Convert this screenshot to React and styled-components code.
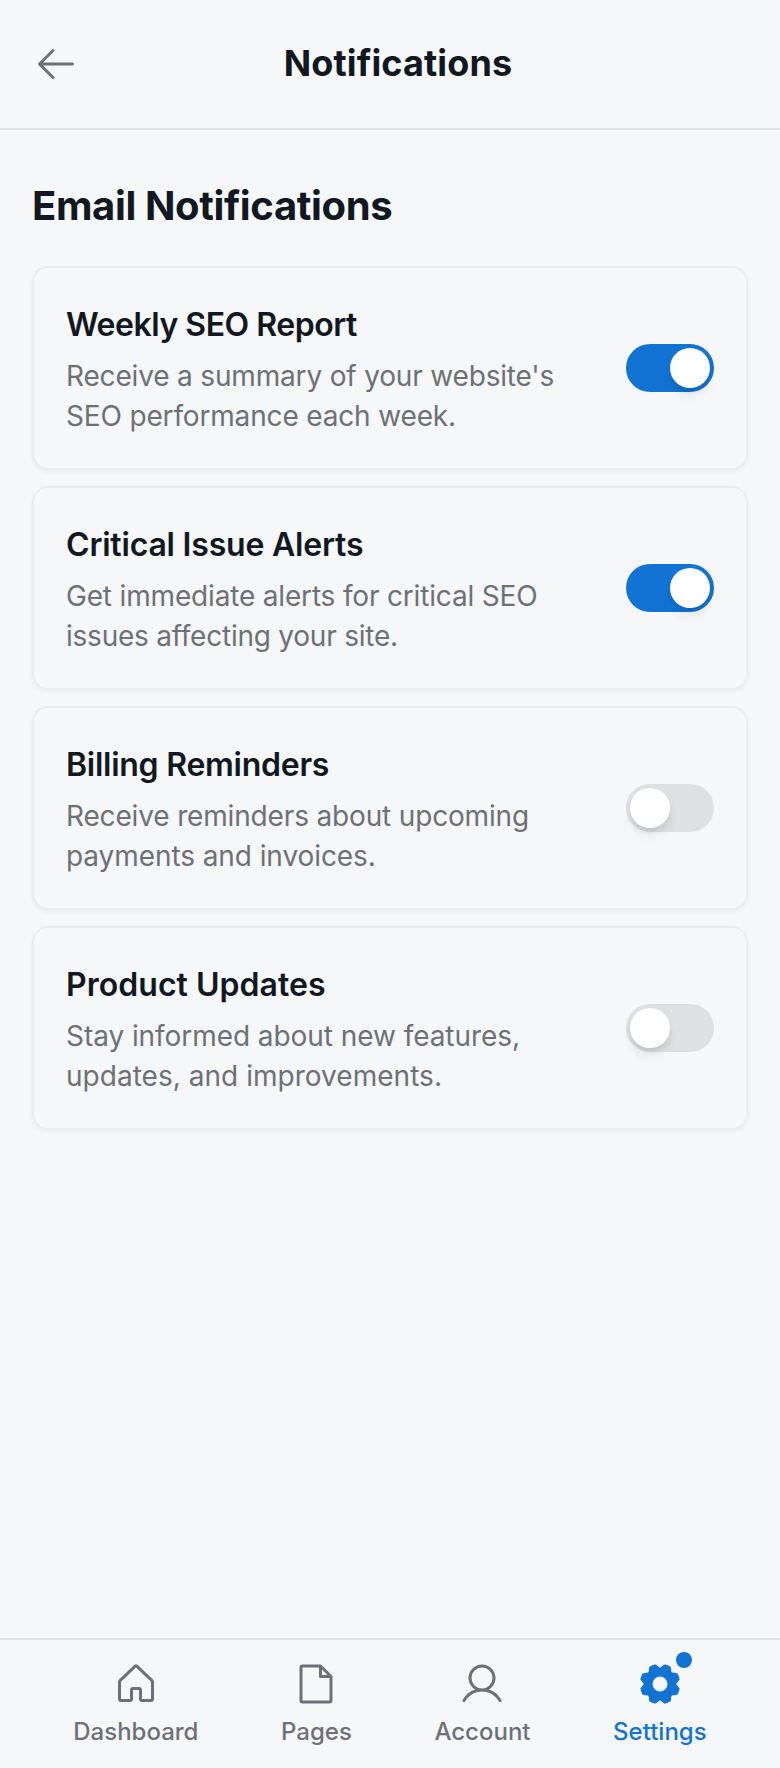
import React, { useState } from 'react';
import styled, { createGlobalStyle } from 'styled-components';
import { PiArrowLeft, PiFile, PiUser, PiGearFill } from 'react-icons/pi';

const GlobalStyle = createGlobalStyle`
  *, *::before, *::after { box-sizing: border-box; }
  body {
    margin: 0;
    background: #f6f7f8;
    color: #111821;
    font-family: Inter, "Liberation Sans", sans-serif;
  }
  button { font: inherit; color: inherit; border: 0; padding: 0; background: none; cursor: pointer; }
  h1, h2, h3, p { margin: 0; }
  svg { display: block; }
`;

const Screen = styled.div`
  display: flex;
  flex-direction: column;
  min-height: 1768px;
`;

const Header = styled.header`
  display: flex;
  align-items: center;
  height: 130px;
  padding: 0 32px;
  border-bottom: 2px solid #dfe1e3;
`;

const BackButton = styled.button`
  color: #6d7177;
`;

const Title = styled.h1`
  flex: 1;
  margin-bottom: 2px;
  padding-right: 32px;
  font-size: 36px;
  line-height: 54px;
  font-weight: 700;
  letter-spacing: 0.12px;
  text-align: center;
`;

const Main = styled.main`
  flex: 1;
  padding: 48px 32px;
`;

const SectionTitle = styled.h2`
  margin-bottom: 32px;
  font-size: 40px;
  line-height: 56px;
  font-weight: 700;
  letter-spacing: -0.37px;
`;

const CardList = styled.div`
  display: flex;
  flex-direction: column;
  gap: 16px;
`;

const Card = styled.div`
  display: flex;
  align-items: center;
  justify-content: space-between;
  gap: 32px;
  padding: 32px;
  border: 2px solid #ebecee;
  border-radius: 16px;
  box-shadow: 0 2px 4px rgba(0, 0, 0, 0.05);
`;

const CardText = styled.div`
  flex: 1;
`;

const CardTitle = styled.h3`
  margin-bottom: 6px;
  font-size: 32px;
  line-height: 50px;
  font-weight: 600;
  letter-spacing: ${({ $tracking }) => $tracking}px;
`;

const CardDescription = styled.p`
  color: #6d7177;
  font-size: 28px;
  line-height: 40px;
`;

const Line = styled.span`
  display: block;
  letter-spacing: ${({ $tracking }) => $tracking}px;
`;

const Toggle = styled.button`
  display: flex;
  flex: none;
  justify-content: ${({ $on }) => ($on ? 'flex-end' : 'flex-start')};
  width: 88px;
  height: 48px;
  padding: 4px;
  border-radius: 24px;
  background: ${({ $on }) => ($on ? '#1173d4' : '#dfe0e2')};
`;

const Knob = styled.span`
  width: 40px;
  height: 40px;
  border-radius: 50%;
  background: #fff;
  box-shadow: 0 8px 12px -2px rgba(0, 0, 0, 0.1), 0 4px 8px -4px rgba(0, 0, 0, 0.1);
`;

const Nav = styled.nav`
  display: flex;
  justify-content: space-around;
  height: 130px;
  padding: 20px 32px;
  border-top: 2px solid #dfe1e3;
`;

const NavItem = styled.button`
  display: flex;
  flex-direction: column;
  align-items: center;
  gap: 8px;
  color: ${({ $active }) => ($active ? '#1173d4' : '#6d7177')};
`;

const NavIcon = styled.span`
  position: relative;
`;

const Dot = styled.span`
  position: absolute;
  top: -8px;
  right: -8px;
  width: 16px;
  height: 16px;
  border-radius: 50%;
  background: #1173d4;
`;

const NavLabel = styled.span`
  font-size: 24px;
  line-height: 32px;
  font-weight: 500;
`;

function HouseIcon({ size }) {
  return (
    <svg width={size} height={size} viewBox="0 0 256 256" fill="currentColor" aria-hidden="true">
      <path d="M218.83,103.77l-80-75.48a1.14,1.14,0,0,1-.11-.11,16,16,0,0,0-21.53,0l-.11.11L37.17,103.77A16,16,0,0,0,32,115.55V208a16,16,0,0,0,16,16H96a16,16,0,0,0,16-16V160h32v48a16,16,0,0,0,16,16h48a16,16,0,0,0,16-16V115.55A16,16,0,0,0,218.83,103.77ZM208,208H160V160a16,16,0,0,0-16-16H112a16,16,0,0,0-16,16v48H48V115.55l.11-.1L128,40l79.9,75.43.11.1Z" />
    </svg>
  );
}

const settings = [
  {
    title: 'Weekly SEO Report',
    tracking: -0.47,
    lines: [["Receive a summary of your website's", -0.17], ['SEO performance each week.', -0.16]],
    on: true,
  },
  {
    title: 'Critical Issue Alerts',
    tracking: -0.2,
    lines: [['Get immediate alerts for critical SEO', -0.17], ['issues affecting your site.', -0.23]],
    on: true,
  },
  {
    title: 'Billing Reminders',
    tracking: -0.26,
    lines: [['Receive reminders about upcoming', -0.16], ['payments and invoices.', -0.08]],
    on: false,
  },
  {
    title: 'Product Updates',
    tracking: 0.04,
    lines: [['Stay informed about new features,', -0.06], ['updates, and improvements.', 0.03]],
    on: false,
  },
];

const tabs = [
  { label: 'Dashboard', icon: HouseIcon },
  { label: 'Pages', icon: PiFile },
  { label: 'Account', icon: PiUser },
  { label: 'Settings', icon: PiGearFill, active: true },
];

function SettingCard({ title, tracking, lines, on }) {
  const [checked, setChecked] = useState(on);
  return (
    <Card>
      <CardText>
        <CardTitle $tracking={tracking}>{title}</CardTitle>
        <CardDescription>
          {lines.map(([text, lineTracking]) => (
            <Line key={text} $tracking={lineTracking}>{text}</Line>
          ))}
        </CardDescription>
      </CardText>
      <Toggle $on={checked} role="switch" aria-checked={checked} aria-label={title} onClick={() => setChecked(!checked)}>
        <Knob />
      </Toggle>
    </Card>
  );
}

export default function App() {
  return (
    <Screen>
      <GlobalStyle />
      <Header>
        <BackButton aria-label="Back">
          <PiArrowLeft size={48} />
        </BackButton>
        <Title>Notifications</Title>
      </Header>
      <Main>
        <SectionTitle>Email Notifications</SectionTitle>
        <CardList>
          {settings.map((s) => (
            <SettingCard key={s.title} {...s} />
          ))}
        </CardList>
      </Main>
      <Nav>
        {tabs.map(({ label, icon: Icon, active }) => (
          <NavItem key={label} $active={active}>
            <NavIcon>
              <Icon size={48} />
              {active && <Dot />}
            </NavIcon>
            <NavLabel>{label}</NavLabel>
          </NavItem>
        ))}
      </Nav>
    </Screen>
  );
}
